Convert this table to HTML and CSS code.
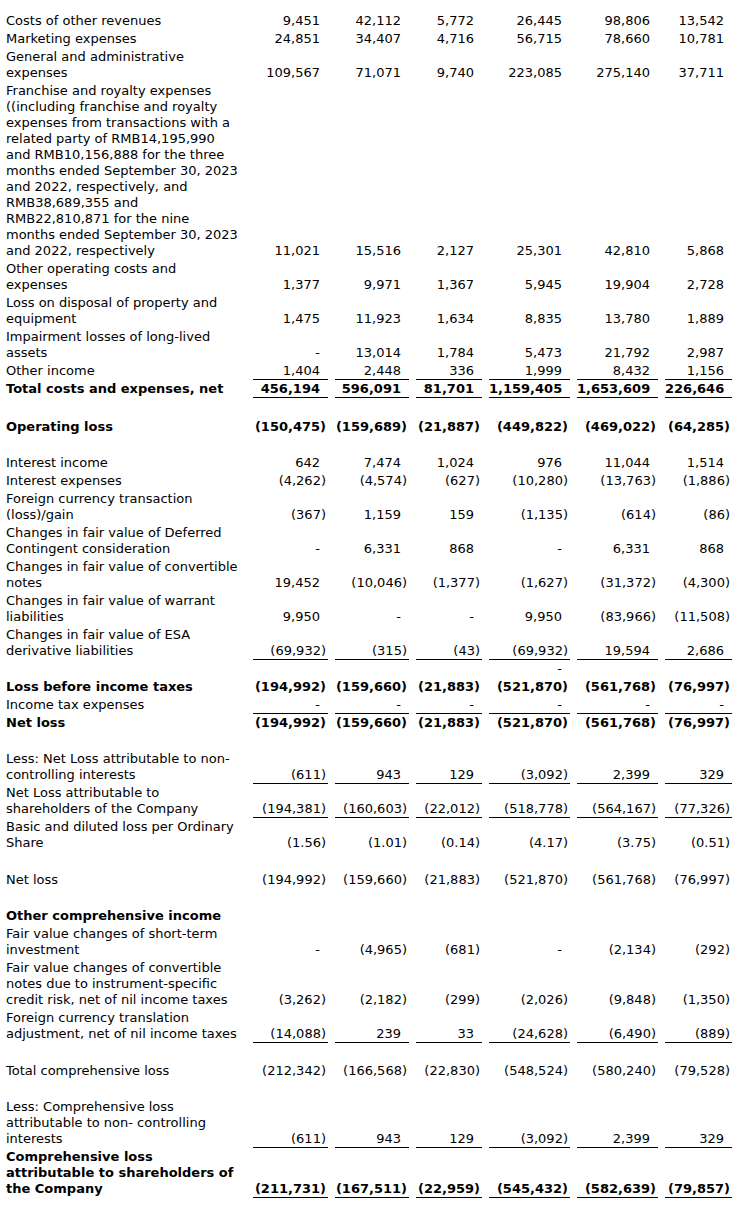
FILE: index.html
```html
<!DOCTYPE html>
<html lang="en">
<head>
<meta charset="utf-8">
<title>Condensed Consolidated Statements of Comprehensive Loss</title>
<link rel="stylesheet" href="styles.css">
</head>
<body>
<table class="fin">
  <colgroup>
    <col class="c-label">
    <col class="c1">
    <col class="c2">
    <col class="c3">
    <col class="c4">
    <col class="c5">
    <col class="c6">
  </colgroup>
  <tbody>
    <tr><td class="lbl">Costs of other revenues</td><td>9,451</td><td>42,112</td><td>5,772</td><td>26,445</td><td>98,806</td><td>13,542</td></tr>
    <tr><td class="lbl">Marketing expenses</td><td>24,851</td><td>34,407</td><td>4,716</td><td>56,715</td><td>78,660</td><td>10,781</td></tr>
    <tr><td class="lbl">General and administrative expenses</td><td>109,567</td><td>71,071</td><td>9,740</td><td>223,085</td><td>275,140</td><td>37,711</td></tr>
    <tr><td class="lbl">Franchise and royalty expenses ((including franchise and royalty expenses from transactions with a related party of RMB14,195,990 and RMB10,156,888 for the three months ended September 30, 2023 and 2022, respectively, and RMB38,689,355 and RMB22,810,871 for the nine months ended September 30, 2023 and 2022, respectively</td><td>11,021</td><td>15,516</td><td>2,127</td><td>25,301</td><td>42,810</td><td>5,868</td></tr>
    <tr><td class="lbl">Other operating costs and expenses</td><td>1,377</td><td>9,971</td><td>1,367</td><td>5,945</td><td>19,904</td><td>2,728</td></tr>
    <tr><td class="lbl">Loss on disposal of property and equipment</td><td>1,475</td><td>11,923</td><td>1,634</td><td>8,835</td><td>13,780</td><td>1,889</td></tr>
    <tr><td class="lbl">Impairment losses of long-lived assets</td><td>-</td><td>13,014</td><td>1,784</td><td>5,473</td><td>21,792</td><td>2,987</td></tr>
    <tr class="rule"><td class="lbl">Other income</td><td>1,404</td><td>2,448</td><td>336</td><td>1,999</td><td>8,432</td><td>1,156</td></tr>
    <tr class="rule strong"><td class="lbl">Total costs and expenses, net</td><td>456,194</td><td>596,091</td><td>81,701</td><td>1,159,405</td><td>1,653,609</td><td>226,646</td></tr>
    <tr class="gap gap-lg"><td colspan="7"></td></tr>
    <tr class="strong"><td class="lbl">Operating loss</td><td class="neg">(150,475)</td><td class="neg">(159,689)</td><td class="neg">(21,887)</td><td class="neg">(449,822)</td><td class="neg">(469,022)</td><td class="neg">(64,285)</td></tr>
    <tr class="gap"><td colspan="7"></td></tr>
    <tr><td class="lbl">Interest income</td><td>642</td><td>7,474</td><td>1,024</td><td>976</td><td>11,044</td><td>1,514</td></tr>
    <tr><td class="lbl">Interest expenses</td><td class="neg">(4,262)</td><td class="neg">(4,574)</td><td class="neg">(627)</td><td class="neg">(10,280)</td><td class="neg">(13,763)</td><td class="neg">(1,886)</td></tr>
    <tr><td class="lbl">Foreign currency transaction (loss)/gain</td><td class="neg">(367)</td><td>1,159</td><td>159</td><td class="neg">(1,135)</td><td class="neg">(614)</td><td class="neg">(86)</td></tr>
    <tr><td class="lbl">Changes in fair value of Deferred Contingent consideration</td><td>-</td><td>6,331</td><td>868</td><td>-</td><td>6,331</td><td>868</td></tr>
    <tr><td class="lbl">Changes in fair value of convertible notes</td><td>19,452</td><td class="neg">(10,046)</td><td class="neg">(1,377)</td><td class="neg">(1,627)</td><td class="neg">(31,372)</td><td class="neg">(4,300)</td></tr>
    <tr><td class="lbl">Changes in fair value of warrant liabilities</td><td>9,950</td><td>-</td><td>-</td><td>9,950</td><td class="neg">(83,966)</td><td class="neg">(11,508)</td></tr>
    <tr class="rule"><td class="lbl">Changes in fair value of ESA derivative liabilities</td><td class="neg">(69,932)</td><td class="neg">(315)</td><td class="neg">(43)</td><td class="neg">(69,932)</td><td>19,594</td><td>2,686</td></tr>
    <tr><td class="lbl"></td><td></td><td></td><td></td><td>-</td><td></td><td></td></tr>
    <tr class="strong"><td class="lbl">Loss before income taxes</td><td class="neg">(194,992)</td><td class="neg">(159,660)</td><td class="neg">(21,883)</td><td class="neg">(521,870)</td><td class="neg">(561,768)</td><td class="neg">(76,997)</td></tr>
    <tr class="rule"><td class="lbl">Income tax expenses</td><td>-</td><td>-</td><td>-</td><td>-</td><td>-</td><td>-</td></tr>
    <tr class="strong"><td class="lbl">Net loss</td><td class="neg">(194,992)</td><td class="neg">(159,660)</td><td class="neg">(21,883)</td><td class="neg">(521,870)</td><td class="neg">(561,768)</td><td class="neg">(76,997)</td></tr>
    <tr class="gap"><td colspan="7"></td></tr>
    <tr class="rule"><td class="lbl">Less: Net Loss attributable to non-controlling interests</td><td class="neg">(611)</td><td>943</td><td>129</td><td class="neg">(3,092)</td><td>2,399</td><td>329</td></tr>
    <tr class="rule"><td class="lbl">Net Loss attributable to shareholders of the Company</td><td class="neg">(194,381)</td><td class="neg">(160,603)</td><td class="neg">(22,012)</td><td class="neg">(518,778)</td><td class="neg">(564,167)</td><td class="neg">(77,326)</td></tr>
    <tr><td class="lbl">Basic and diluted loss per Ordinary Share</td><td class="neg">(1.56)</td><td class="neg">(1.01)</td><td class="neg">(0.14)</td><td class="neg">(4.17)</td><td class="neg">(3.75)</td><td class="neg">(0.51)</td></tr>
    <tr class="gap gap-md"><td colspan="7"></td></tr>
    <tr><td class="lbl">Net loss</td><td class="neg">(194,992)</td><td class="neg">(159,660)</td><td class="neg">(21,883)</td><td class="neg">(521,870)</td><td class="neg">(561,768)</td><td class="neg">(76,997)</td></tr>
    <tr class="gap"><td colspan="7"></td></tr>
    <tr class="strong"><td class="lbl">Other comprehensive income</td><td></td><td></td><td></td><td></td><td></td><td></td></tr>
    <tr><td class="lbl">Fair value changes of short-term investment</td><td>-</td><td class="neg">(4,965)</td><td class="neg">(681)</td><td>-</td><td class="neg">(2,134)</td><td class="neg">(292)</td></tr>
    <tr><td class="lbl">Fair value changes of convertible notes due to instrument-specific credit risk, net of nil income taxes</td><td class="neg">(3,262)</td><td class="neg">(2,182)</td><td class="neg">(299)</td><td class="neg">(2,026)</td><td class="neg">(9,848)</td><td class="neg">(1,350)</td></tr>
    <tr class="rule"><td class="lbl">Foreign currency translation adjustment, net of nil income taxes</td><td class="neg">(14,088)</td><td>239</td><td>33</td><td class="neg">(24,628)</td><td class="neg">(6,490)</td><td class="neg">(889)</td></tr>
    <tr class="gap gap-md"><td colspan="7"></td></tr>
    <tr><td class="lbl">Total comprehensive loss</td><td class="neg">(212,342)</td><td class="neg">(166,568)</td><td class="neg">(22,830)</td><td class="neg">(548,524)</td><td class="neg">(580,240)</td><td class="neg">(79,528)</td></tr>
    <tr class="gap"><td colspan="7"></td></tr>
    <tr class="rule"><td class="lbl">Less: Comprehensive loss attributable to non- controlling interests</td><td class="neg">(611)</td><td>943</td><td>129</td><td class="neg">(3,092)</td><td>2,399</td><td>329</td></tr>
    <tr class="rule strong"><td class="lbl">Comprehensive loss attributable to shareholders of the Company</td><td class="neg">(211,731)</td><td class="neg">(167,511)</td><td class="neg">(22,959)</td><td class="neg">(545,432)</td><td class="neg">(582,639)</td><td class="neg">(79,857)</td></tr>
  </tbody>
</table>
</body>
</html>
```

FILE: styles.css
```css
html, body {
  margin: 0;
  padding: 0;
  background: #ffffff;
}

body {
  font-family: "DejaVu Sans", Verdana, sans-serif;
  font-size: 13px;
  line-height: 16px;
  color: #000000;
}

.fin {
  table-layout: fixed;
  width: 740px;
  border-collapse: separate;
  border-spacing: 7px 0;
  margin: 12px 0 0 -1px;
}

.c-label { width: 240px; }
.c1 { width: 75px; }
.c2 { width: 74px; }
.c3 { width: 66px; }
.c4 { width: 81px; }
.c5 { width: 81px; }
.c6 { width: 67px; }

.fin td {
  padding: 1px 8px 1px 0;
  text-align: right;
  vertical-align: bottom;
  white-space: nowrap;
}

.fin td.lbl {
  padding: 1px 6px 1px 0;
  text-align: left;
  vertical-align: top;
  white-space: normal;
}

.fin td.neg {
  padding-right: 2px;
}

.fin tr.rule td:not(.lbl) {
  padding-bottom: 0;
  border-bottom: 1px solid #000000;
}

.fin tr.strong td {
  font-weight: bold;
}

.fin tr.gap td {
  height: 16px;
  padding: 1px 0;
}

.fin tr.gap-md td {
  height: 17px;
}

.fin tr.gap-lg td {
  height: 18px;
}
```
